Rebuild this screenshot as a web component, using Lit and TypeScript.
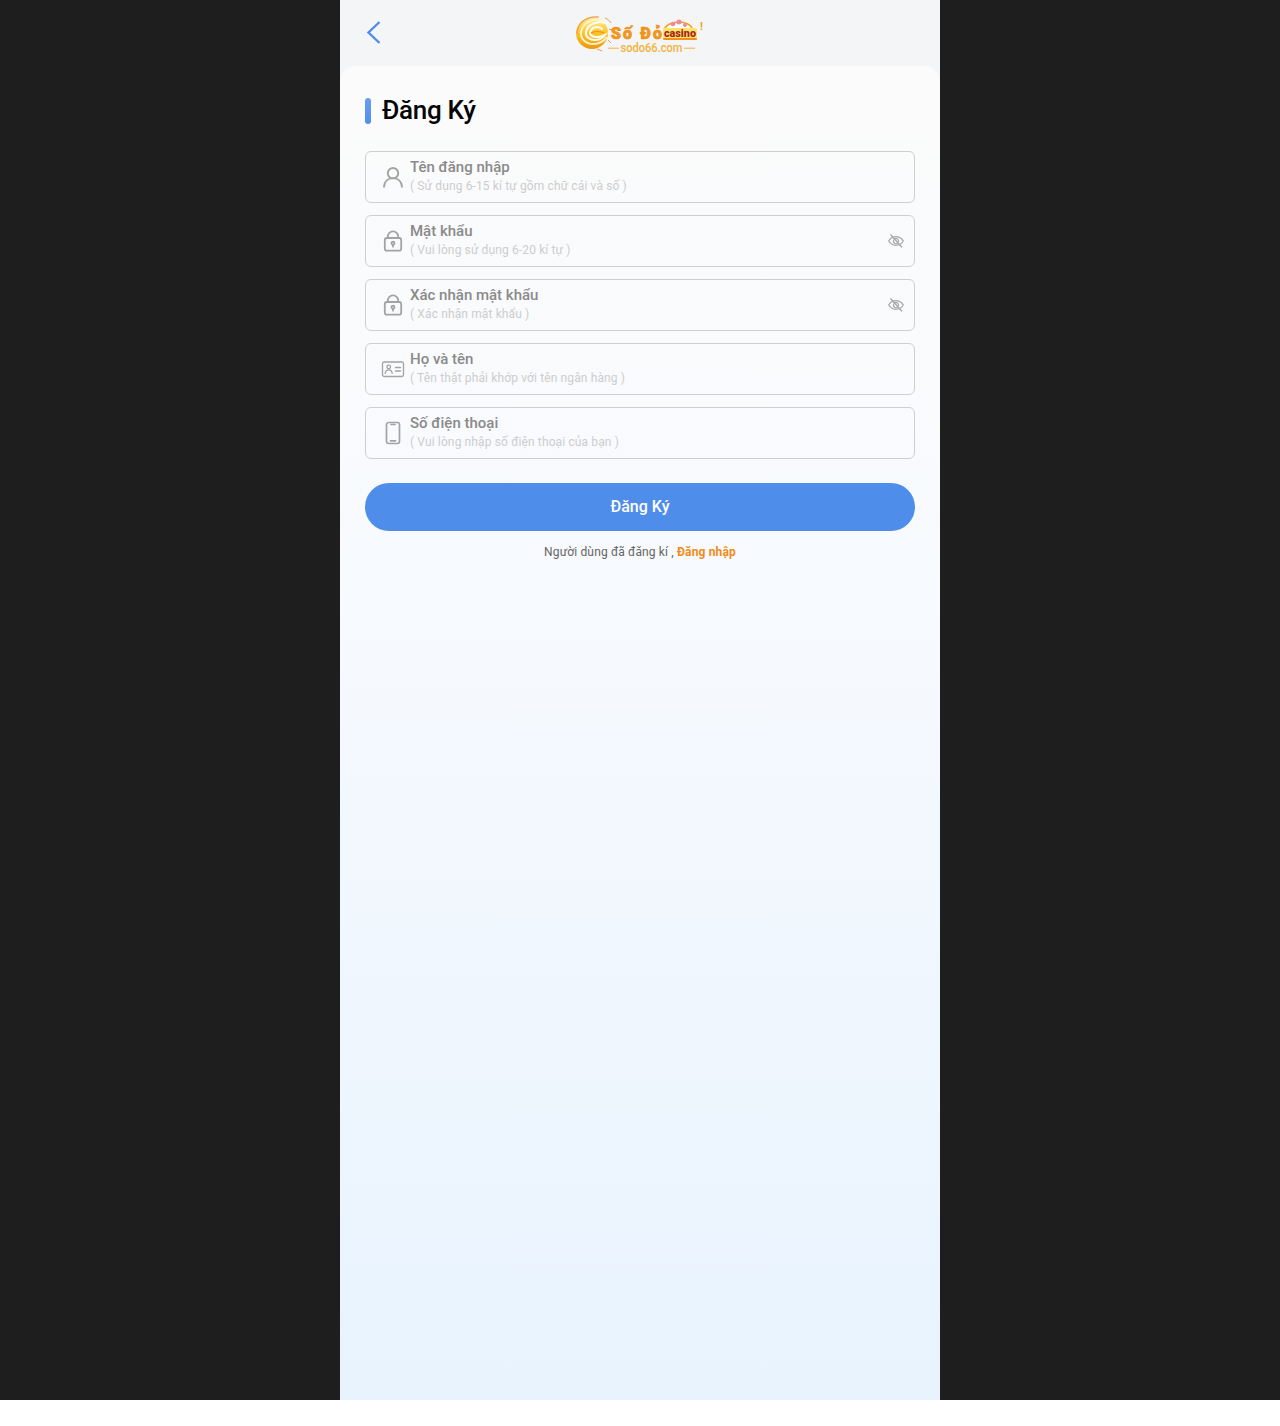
import { LitElement, html, css, svg } from "lit";
import { customElement } from "lit/decorators.js";

const user = svg`<svg class="ic" width="24" height="24" viewBox="0 0 24 24" fill="none" stroke="#a3a3a3" stroke-width="1.9" stroke-linecap="round"><circle cx="12" cy="8.200" r="5.200"/><path d="M3 21.800c.4-5.300 4-8.700 9-8.700s8.600 3.400 9 8.700"/></svg>`;
const lock = svg`<svg class="ic" width="24" height="24" viewBox="0 0 24 24" fill="none" stroke="#a3a3a3" stroke-width="1.800" stroke-linecap="round"><rect x="3.800" y="9" width="16.400" height="12.600" rx="2.200"/><path d="M6.800 9V7.500a5.200 5.200 0 0 1 10.400 0V9"/><circle cx="12" cy="14.200" r="1.500"/><path d="M12 15.700v2"/></svg>`;
const card = svg`<svg class="ic" width="24" height="24" viewBox="0 0 24 24" fill="none" stroke="#a3a3a3" stroke-width="1.300" stroke-linecap="round"><rect x="1.500" y="5" width="21" height="14.500" rx="1.800"/><circle cx="7.700" cy="10" r="1.800"/><path d="M4.200 16.300c.3-2.200 1.700-3.400 3.500-3.400s3.200 1.200 3.500 3.400M14.500 10.500h5M14.500 14h5"/></svg>`;
const phone = svg`<svg class="ic" width="24" height="24" viewBox="0 0 24 24" fill="none" stroke="#a3a3a3" stroke-width="1.700" stroke-linecap="round"><rect x="5.500" y="1.500" width="13" height="21" rx="2.200"/><path d="M10 3.500h4M9.500 19.800h5"/></svg>`;
const eye = svg`<svg width="16" height="16" viewBox="0 0 16 16" fill="none" stroke="#a8a8a8" stroke-width="1.300" stroke-linecap="round"><path d="M.7 8c1.700-2.700 4.200-4.300 7.300-4.300S13.600 5.300 15.300 8c-1.700 2.700-4.200 4.300-7.300 4.300S2.400 10.700.7 8z"/><path d="M5.700 7a2.500 2.500 0 0 0 3.600 3.200M10.400 8.600A2.500 2.500 0 0 0 7.200 5.600"/><path d="M2.800 1.800l10.800 12.200"/></svg>`;

const logo = svg`<svg width="130" height="40" viewBox="0 0 130 40" aria-label="Số Đỏ casino">
  <defs>
    <linearGradient id="g" x1="0" y1="0" x2="0" y2="1"><stop offset="0" stop-color="#fff0a0"/><stop offset=".5" stop-color="#fdc526"/><stop offset="1" stop-color="#ef9412"/></linearGradient>
  </defs>
  <circle cx="17" cy="20" r="16" fill="url(#g)"/>
  <path d="M2 21C2 10 11 3 24 4" fill="none" stroke="#ec9a5c" stroke-width="1.200"/>
  <path d="M27 8C18 4 8 10 6 19c-1 7 5 12 12 12 6 0 11-3 14-7" fill="none" stroke="#fff3c4" stroke-width="2"/>
  <path d="M34 11C24 7 13 10 11 19c-1 5 4 8 9 8 4 0 8-2 10-5-4 2-9 3-13 1-3-2-2-6 1-8 3-1 7-1 9 1" fill="none" stroke="#fffbec" stroke-width="2.200" stroke-linecap="round"/>
  <path d="M16 20c4-2 9-2 13 0" fill="none" stroke="#f09a1c" stroke-width="1.400"/>
  <path d="M30 5c3 1 5 3 6 5M34 16l3 1M33 27l3 3M22 36l5 2" fill="none" stroke="#ec9a5c" stroke-width="1"/>
  <path d="M89 18c1-11 27-13 29 0z" fill="#fff" stroke="#f4a21d" stroke-width="1.600"/>
  <circle cx="98" cy="11" r="2.300" fill="#f08a9b"/><circle cx="104" cy="9" r="2.500" fill="#f08a9b"/><circle cx="110" cy="12" r="2.100" fill="#f08a9b"/>
  <rect x="88" y="15" width="34" height="11" rx="1.500" fill="#ffe36a"/>
  <rect x="88" y="25" width="34" height="2" rx="1" fill="#f08f1a"/>
  <text x="105" y="24" font-family="Roboto, sans-serif" font-weight="900" font-size="11" text-anchor="middle" fill="#a8261a" textLength="32" lengthAdjust="spacingAndGlyphs">casino</text>
  <text x="36" y="26" font-family="Roboto, sans-serif" font-weight="900" font-size="16" fill="#f29a17" stroke="#ee8a12" stroke-width=".6" textLength="51" lengthAdjust="spacing">Số Đỏ</text>
  <text x="125" y="17" font-family="Roboto, sans-serif" font-weight="700" font-size="11" fill="#f4a21d">!</text>
  <path d="M33 35.200h11M109 35.200h11" stroke="#f4b23d" stroke-width="1"/>
  <text x="76.500" y="38.500" font-family="Roboto, sans-serif" font-weight="500" font-size="12" text-anchor="middle" fill="#f4b23d" textLength="62" lengthAdjust="spacingAndGlyphs">sodo66.com</text>
</svg>`;

const fields = [
  { icon: user, label: "Tên đăng nhập", hint: "( Sử dụng 6-15 kí tự gồm chữ cái và số )" },
  { icon: lock, label: "Mật khẩu", hint: "( Vui lòng sử dụng 6-20 kí tự )", eye: true },
  { icon: lock, label: "Xác nhận mật khẩu", hint: "( Xác nhận mật khẩu )", eye: true },
  { icon: card, label: "Họ và tên", hint: "( Tên thật phải khớp với tên ngân hàng )" },
  { icon: phone, label: "Số điện thoại", hint: "( Vui lòng nhập số điện thoại của bạn )" },
];

@customElement("app-root")
export class AppRoot extends LitElement {
  static styles = css`
    :host {
      display: block;
      font-family: Roboto, "Noto Sans", sans-serif;
    }
    .page {
      height: 1400px;
      background: #1e1e1e;
      display: flex;
      justify-content: center;
    }
    .phone {
      width: 600px;
      height: 1400px;
      background: #f4f5f7;
      display: flex;
      flex-direction: column;
    }
    .top {
      height: 66px;
      flex: none;
      display: grid;
      grid-template-columns: 1fr auto 1fr;
      align-items: center;
      padding-left: 26px;
    }
    .back {
      display: block;
      margin: -3px 0 0 -1px;
    }
    .logo {
      display: block;
      margin: 3px 0 0 -26px;
    }
    .sheet {
      flex: 1;
      border-radius: 16px 16px 0 0;
      background: linear-gradient(180deg, #fbfbfb 0%, #f7fafe 40%, #e8f3fe 100%);
      padding: 32px 25px 0;
      box-sizing: border-box;
    }
    .title {
      display: flex;
      align-items: center;
      gap: 11px;
      height: 26px;
      margin: 0 0 27px;
    }
    .mark {
      width: 6px;
      height: 26px;
      border-radius: 3px;
      background: linear-gradient(180deg, #6b9ff0, #4f8dea);
    }
    h1 {
      margin: -2px 0 0;
      font-size: 26px;
      font-weight: 500;
      line-height: 26px;
      color: #050505;
      letter-spacing: -0.3px;
    }
    .fields {
      display: flex;
      flex-direction: column;
      gap: 12px;
    }
    .field {
      height: 52px;
      box-sizing: border-box;
      border: 1px solid #cfcfcf;
      border-radius: 6px;
      display: flex;
      align-items: center;
      padding: 0 10px 0 15px;
      gap: 5px;
    }
    .ic {
      display: block;
      flex: none;
    }
    .text {
      flex: 1;
      margin-top: -2px;
    }
    .label {
      font-size: 15px;
      font-weight: 500;
      line-height: 18px;
      color: #8a8a8a;
      margin-top: -1px;
    }
    .hint {
      font-size: 12px;
      line-height: 16px;
      margin-top: 2px;
      color: #cdcdcd;
      letter-spacing: 0.13px;
    }
    .eye {
      display: block;
      flex: none;
      height: 16px;
    }
    .eye svg {
      display: block;
    }
    .submit {
      display: block;
      width: 100%;
      height: 48px;
      margin-top: 24px;
      padding: 0 0 2px;
      border: 0;
      border-radius: 24px;
      background: #4f8dea;
      color: #fff;
      font: 500 16px Roboto, sans-serif;
      letter-spacing: 0.02px;
    }
    .foot {
      margin-top: 13px;
      text-align: center;
      font-size: 12px;
      line-height: 16px;
      color: #666;
      letter-spacing: 0.15px;
    }
    .foot b {
      color: #f28a1a;
      font-weight: 700;
    }
    .tail {
      height: 26px;
      background: #fff;
    }
  `;

  render() {
    return html`
      <div class="page">
        <div class="phone">
          <div class="top">
            <svg class="back" width="16" height="24" viewBox="0 0 16 24" fill="none" stroke="#4f8dea" stroke-width="2.400">
              <path d="M14.500 2 3.500 12.500 14.500 23"/>
            </svg>
            <div class="logo">${logo}</div>
          </div>
          <div class="sheet">
            <div class="title"><span class="mark"></span><h1>Đăng Ký</h1></div>
            <div class="fields">
              ${fields.map(
                (f) => html`
                  <div class="field">
                    ${f.icon}
                    <div class="text">
                      <div class="label">${f.label}</div>
                      <div class="hint">${f.hint}</div>
                    </div>
                    ${f.eye ? html`<span class="eye">${eye}</span>` : ""}
                  </div>
                `
              )}
            </div>
            <button class="submit">Đăng Ký</button>
            <div class="foot">Người dùng đã đăng kí , <b>Đăng nhập</b></div>
          </div>
        </div>
      </div>
      <div class="tail"></div>
    `;
  }
}
